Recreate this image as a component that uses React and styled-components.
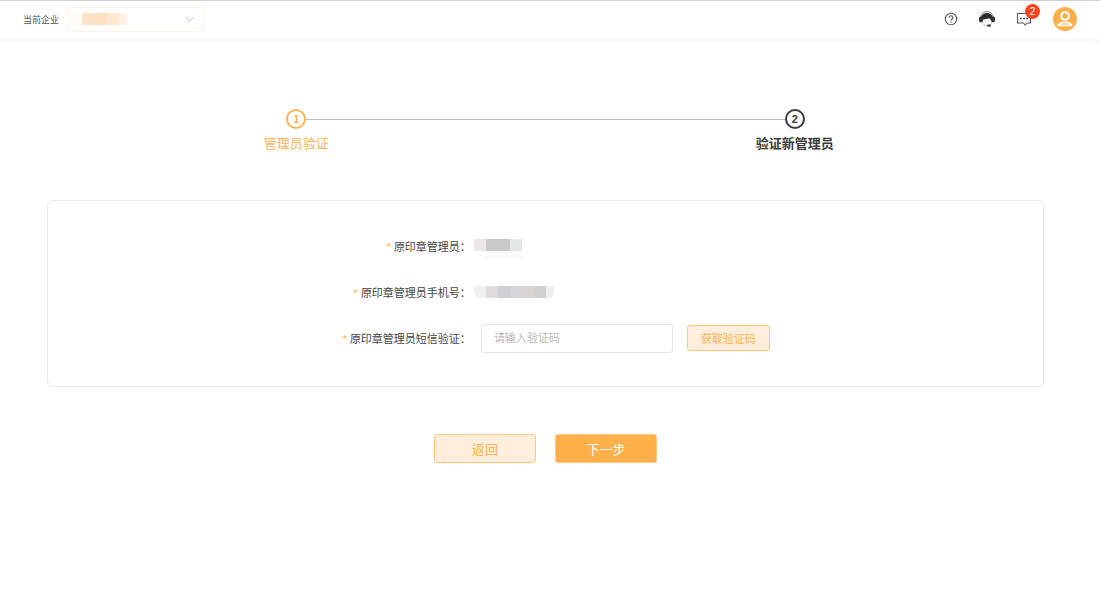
import React, { useState } from 'react';
import styled, { createGlobalStyle, css } from 'styled-components';

const steps = ['管理员验证', '验证新管理员'];

export default function App() {
  const [ code, setCode ] = useState('');

  const onChangeCode = (e) => {
    setCode(e.target.value);
  }

  return (
    <>
      <GlobalStyle />
      <Header>
        <CompanyLabel htmlFor="company">当前企业</CompanyLabel>
        <SelectWrap>
          <CompanySelect id="company" />
          <CompanyMask>
            <Block $width={ 15 } $color="#fffaf5" />
            <Block $width={ 12 } $color="#ffe3c8" />
            <Block $width={ 12 } $color="#fddfc1" />
            <Block $width={ 12 } $color="#ffe6cf" />
            <Block $width={ 9 } $color="#fff0e2" />
          </CompanyMask>
          <ChevronIcon />
        </SelectWrap>
        <Tools>
          <IconButton type="button" aria-label="帮助"><HelpIcon /></IconButton>
          <IconButton type="button" aria-label="客服"><ServiceIcon /></IconButton>
          <IconButton type="button" aria-label="消息">
            <MessageIcon />
            <Badge>2</Badge>
          </IconButton>
          <AvatarButton type="button" aria-label="账号"><AvatarIcon /></AvatarButton>
        </Tools>
      </Header>
      <Main>
        <Steps>
          {steps.map((title, idx) => (
            <Step key={ title } $current={ idx === 1 }>
              <StepNumber>{ idx + 1 }</StepNumber>
              <StepTitle>{ title }</StepTitle>
            </Step>
          ))}
        </Steps>
        <Card>
          <Row>
            <RowLabel as="span">原印章管理员：</RowLabel>
            <Mask $tall>
              <MaskLine>
                <Block $width={ 12 } $color="#e9e7e7" />
                <Block $width={ 24 } $color="#c9c9c9" />
                <Block $width={ 12 } $color="#e6e8e8" />
              </MaskLine>
              <MaskLine $end>
                <Block $width={ 36 } $height={ 8 } $color="#fafafa" />
              </MaskLine>
            </Mask>
          </Row>
          <Row>
            <RowLabel as="span">原印章管理员手机号：</RowLabel>
            <Mask $rounded>
              <MaskLine>
                <Block $width={ 12 } $color="#f0f2f2" />
                <Block $width={ 12 } $color="#dedbdc" />
                <Block $width={ 12 } $color="#d0d0d2" />
                <Block $width={ 12 } $color="#d6d6d8" />
                <Block $width={ 12 } $color="#d8d4d4" />
                <Block $width={ 12 } $color="#d0d0d0" />
                <Block $width={ 8 } $color="#ededed" />
              </MaskLine>
            </Mask>
          </Row>
          <Row>
            <RowLabel htmlFor="code">原印章管理员短信验证：</RowLabel>
            <Field>
              <CodeInput id="code" placeholder="请输入验证码" value={ code } onChange={ onChangeCode } />
              <CodeButton type="button">获取验证码</CodeButton>
            </Field>
          </Row>
        </Card>
        <Actions>
          <ActionButton type="button">返回</ActionButton>
          <ActionButton type="button" $primary>下一步</ActionButton>
        </Actions>
      </Main>
    </>
  )
}

function ChevronIcon() {
  return (
    <svg width="10" height="6" viewBox="0 0 10 6" fill="none" stroke="#c4c6cc">
      <path d="M1 1l4 4 4-4" />
    </svg>
  )
}

function HelpIcon() {
  return (
    <svg width="14" height="14" viewBox="0 0 14 14" fill="none" stroke="#555">
      <circle cx="7" cy="7" r="5.7" strokeWidth="1.1" />
      <path d="M5.1 5.7a1.9 1.9 0 1 1 2.8 1.6c-.6.4-.9.6-.9 1.3M7 9.5v1.2" strokeWidth="1.1" />
    </svg>
  )
}

function ServiceIcon() {
  return (
    <svg width="16" height="16" viewBox="0 0 16 16" fill="none">
      <path d="M1.800 6C2.400 2.400 5 .6 8 .6s5.600 1.800 6.200 5.400" stroke="#888" strokeWidth="1" />
      <path d="M2 10.500V8c0-3.800 2.600-6 6-6s6 2.200 6 6v2.500h-1.600C12.300 9 11.400 8 9.800 7.200 8.500 8 6.500 8.300 4.600 8.300c-.5.700-.8 1.300-.9 2.200z" fill="#2b2b2b" />
      <rect x="0" y="5.600" width="3.600" height="5.600" rx="1.600" fill="#333" />
      <rect x="12.400" y="5.600" width="3.600" height="5.600" rx="1.600" fill="#333" />
      <path d="M3 11c.8 2.400 2.700 3.700 5 3.700s4.200-1.300 5-3.700" stroke="#aaa" strokeWidth=".9" />
      <rect x="8" y="13.500" width="4" height="2.300" rx="1.100" fill="#444" />
    </svg>
  )
}

function MessageIcon() {
  return (
    <svg width="16" height="14" viewBox="0 0 16 14" fill="none" stroke="#555">
      <path d="M1.500 1.500h13v9.500H11l-1.800 2L7.400 11H1.500z" strokeWidth="1.100" strokeLinejoin="round" />
      <path d="M4 6.500h1.700M7.200 6.500h1.700M10.400 6.500h1.700" stroke="#333" strokeWidth="1.600" />
    </svg>
  )
}

function AvatarIcon() {
  return (
    <svg width="24" height="24" viewBox="0 0 24 24" fill="none">
      <circle cx="12" cy="12" r="12" fill="#ffb04a" />
      <circle cx="12" cy="9" r="3.800" stroke="#fff" strokeWidth="2" />
      <path d="M5.200 18.400c1.400-2 3.800-3 6.800-3s5.400 1 6.800 3z" stroke="#fff" strokeWidth="1.700" strokeLinejoin="round" />
    </svg>
  )
}

const GlobalStyle = createGlobalStyle`
  * {
    box-sizing: border-box;
  }
  body {
    margin: 0;
    background: #f8f8f8;
    color: #444;
    font-family: "Liberation Sans", "Noto Sans CJK SC", sans-serif;
    font-size: 11px;
  }
  button, input, select {
    font-family: inherit;
  }
  button {
    padding: 0;
    cursor: pointer;
  }
  svg {
    display: block;
  }
`;

const Header = styled.header`
  display: flex;
  align-items: center;
  height: 39px;
  padding: 0 23px 2px;
  border-top: 1px solid #d0d0d0;
  background: #fff;
`;

const CompanyLabel = styled.label`
  margin-right: 8px;
  color: #555;
  font-size: 9px;
`;

const SelectWrap = styled.div`
  position: relative;
  width: 137px;
  svg {
    position: absolute;
    top: 9px;
    right: 9px;
    pointer-events: none;
  }
`;

const CompanySelect = styled.select`
  display: block;
  width: 100%;
  height: 25px;
  border: 1px solid #fff3e8;
  border-radius: 3px;
  background: #fff;
  appearance: none;
`;

const CompanyMask = styled.div`
  position: absolute;
  top: 6px;
  left: 0;
  display: flex;
  pointer-events: none;
`;

const Block = styled.span`
  width: ${({ $width }) => $width}px;
  height: ${({ $height }) => $height || 12}px;
  background: ${({ $color }) => $color};
`;

const Tools = styled.div`
  display: flex;
  align-items: center;
  gap: 21px;
  margin-left: auto;
`;

const IconButton = styled.button`
  position: relative;
  border: 0;
  background: none;
`;

const AvatarButton = styled(IconButton)`
  border-radius: 50%;
`;

const Badge = styled.span`
  position: absolute;
  top: -8px;
  right: -8px;
  width: 15px;
  height: 15px;
  border-radius: 8px;
  background: #ff4219;
  color: #fff;
  font-size: 10px;
  line-height: 15px;
  text-align: center;
`;

const Main = styled.main`
  min-height: calc(100vh - 41px);
  margin-top: 2px;
  padding: 68px 56px 40px 47px;
  border-radius: 0 8px 0 0;
  background: #fff;
`;

const Steps = styled.ol`
  display: flex;
  margin: 0;
  padding: 0;
  list-style: none;
`;

const StepNumber = styled.span`
  width: 20px;
  height: 20px;
  border: 2px solid currentColor;
  border-radius: 50%;
  font-size: 11px;
  font-weight: bold;
  line-height: 16px;
  text-align: center;
`;

const StepTitle = styled.span`
  margin-top: 5px;
  font-size: 13px;
  line-height: 20px;
`;

const Step = styled.li`
  display: flex;
  flex: 1;
  flex-wrap: wrap;
  justify-content: center;
  align-items: center;
  color: #ffb357;
  &::before, &::after {
    flex: 1;
    height: 1px;
    background: #bbb;
    content: '';
  }
  &:first-child::before, &:last-child::after {
    background: none;
  }
  ${StepTitle} {
    order: 1;
    width: 100%;
    text-align: center;
  }
  ${({ $current }) => $current && css`
    color: #3a3a3a;
    font-weight: bold;
  `}
`;

const Card = styled.section`
  display: flex;
  flex-direction: column;
  gap: 16px;
  margin-top: 46px;
  padding: 30px 0 33px;
  border: 1px solid #e9e9e9;
  border-radius: 6px;
`;

const Row = styled.div`
  display: grid;
  grid-template-columns: 85fr 115fr;
  align-items: center;
  height: 30px;
`;

const RowLabel = styled.label`
  text-align: right;
  &::before {
    margin-right: 3px;
    color: #ffb04a;
    content: '*';
  }
`;

const Mask = styled.div`
  justify-self: start;
  margin-left: 3px;
  padding-top: ${({ $tall }) => $tall ? '5px' : '0'};
  overflow: hidden;
  border-radius: ${({ $rounded }) => $rounded ? '2px 0 6px 6px' : '0'};
`;

const MaskLine = styled.div`
  display: flex;
  justify-content: ${({ $end }) => $end ? 'flex-end' : 'flex-start'};
`;

const Field = styled.div`
  display: flex;
  align-items: center;
  gap: 14px;
  padding-left: 10px;
`;

const CodeInput = styled.input`
  width: 192px;
  height: 29px;
  padding: 0 12px;
  border: 1px solid #e4e4e8;
  border-radius: 3px;
  font-size: 11px;
  &::placeholder {
    color: #b8b8b8;
  }
`;

const CodeButton = styled.button`
  width: 83px;
  height: 26px;
  border: 1px solid #ffc780;
  border-radius: 3px;
  background: #ffeedb;
  color: #ffb04a;
  font-size: 11px;
`;

const Actions = styled.div`
  display: flex;
  justify-content: center;
  gap: 19px;
  margin-top: 47px;
`;

const ActionButton = styled.button`
  width: 102px;
  height: 29px;
  border: 1px solid #ffc780;
  border-radius: 3px;
  background: ${({ $primary }) => $primary ? '#ffb04a' : '#ffeedb'};
  color: ${({ $primary }) => $primary ? '#fff' : '#ffb04a'};
  font-size: 13px;
`;
